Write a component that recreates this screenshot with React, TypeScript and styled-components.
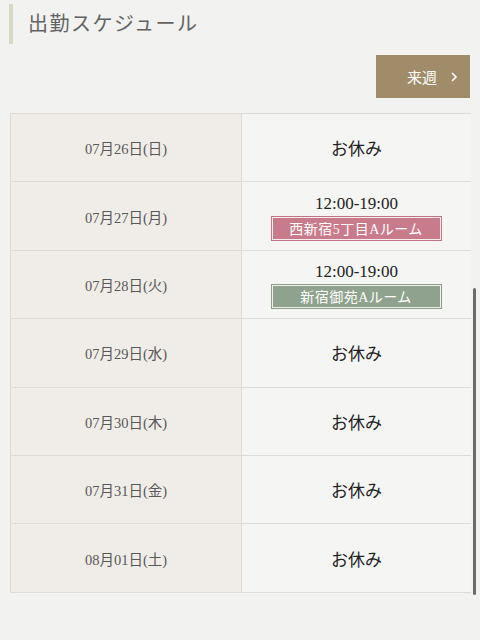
import styled, { createGlobalStyle } from "styled-components";

const GlobalStyle = createGlobalStyle`
  html, body {
    margin: 0;
    padding: 0;
    background: #f2f2f1;
  }
  * {
    box-sizing: border-box;
  }
`;

type Shift = { time: string; room: string; tone: "pink" | "green" };
type Day = { date: string; shift?: Shift };

const days: Day[] = [
  { date: "07月26日(日)" },
  { date: "07月27日(月)", shift: { time: "12:00-19:00", room: "西新宿5丁目Aルーム", tone: "pink" } },
  { date: "07月28日(火)", shift: { time: "12:00-19:00", room: "新宿御苑Aルーム", tone: "green" } },
  { date: "07月29日(水)" },
  { date: "07月30日(木)" },
  { date: "07月31日(金)" },
  { date: "08月01日(土)" },
];

export default function App() {
  return (
    <Page>
      <GlobalStyle />
      <Heading>
        <HeadingBar />
        <HeadingText>出勤スケジュール</HeadingText>
      </Heading>
      <Actions>
        <NextButton>
          <span>来週</span>
          <Chevron viewBox="0 0 8 12">
            <path d="M2 2 L6 6 L2 10" fill="none" stroke="#fff" strokeWidth="1.6" />
          </Chevron>
        </NextButton>
      </Actions>
      <Table>
        {days.map((d) => (
          <Row key={d.date}>
            <DateCell>{d.date}</DateCell>
            <InfoCell>
              {d.shift ? (
                <>
                  <Time>{d.shift.time}</Time>
                  <Room $tone={d.shift.tone}>{d.shift.room}</Room>
                </>
              ) : (
                <Off>お休み</Off>
              )}
            </InfoCell>
          </Row>
        ))}
      </Table>
      <ScrollThumb />
    </Page>
  );
}

const serif = `"Liberation Serif", "Noto Sans CJK JP", serif`;

const Page = styled("div")`
  position: relative;
  width: 480px;
  height: 640px;
  overflow: hidden;
  padding: 3px 9px 0 10px;
  font-family: ${serif};
`;

const Heading = styled("div")`
  display: flex;
  align-items: center;
  height: 41px;
`;

const HeadingBar = styled("div")`
  width: 4px;
  height: 40px;
  margin-left: -1px;
  background: #d9d8c6;
`;

const HeadingText = styled("h1")`
  margin: 0 0 2px 15px;
  font-size: 20px;
  font-weight: normal;
  letter-spacing: 1.5px;
  color: #626262;
  font-family: ${serif};
`;

const Actions = styled("div")`
  display: flex;
  justify-content: flex-end;
  margin-top: 11px;
  padding-right: 1px;
`;

const NextButton = styled("button")`
  display: flex;
  align-items: center;
  justify-content: flex-end;
  gap: 13px;
  width: 94px;
  height: 43px;
  padding: 0 12px 0 0;
  border: none;
  background: #a08c69;
  color: #fff;
  font-family: ${serif};
  font-size: 15px;
  cursor: pointer;
`;

const Chevron = styled("svg")`
  width: 8px;
  height: 12px;
`;

const Table = styled("div")`
  margin-top: 15px;
  width: 461px;
  border-top: 1px solid #dedbd6;
  border-left: 1px solid #dedbd6;
`;

const Row = styled("div")`
  display: grid;
  grid-template-columns: 231px 1fr;
  height: 68.4px;
  border-bottom: 1px solid #dedbd6;
`;

const DateCell = styled("div")`
  display: flex;
  align-items: center;
  justify-content: center;
  background: #f0ede8;
  border-right: 1px solid #dedbd6;
  color: #585858;
  font-size: 14.5px;
`;

const InfoCell = styled("div")`
  display: flex;
  flex-direction: column;
  align-items: center;
  justify-content: center;
  background: #f5f5f4;
  padding-bottom: 2px;
`;

const Off = styled("span")`
  font-size: 17px;
  color: #222;
  margin-top: 2px;
`;

const Time = styled("span")`
  font-size: 17px;
  color: #222;
  line-height: 20px;
  margin-top: 4px;
`;

const Room = styled("span")<{ $tone: "pink" | "green" }>`
  display: flex;
  align-items: center;
  justify-content: center;
  width: 171px;
  height: 25px;
  margin-top: 2px;
  margin-left: -1px;
  border: 1px solid ${(p) => (p.$tone === "pink" ? "#c27386" : "#8c9e88")};
  box-shadow: inset 0 0 0 1px #f4eeee;
  background: ${(p) => (p.$tone === "pink" ? "#c87b8b" : "#8fa28d")};
  color: #fff;
  font-size: 14px;
  letter-spacing: 0.5px;
`;

const ScrollThumb = styled("div")`
  position: absolute;
  top: 288px;
  left: 473px;
  width: 3px;
  height: 307px;
  border-radius: 2px;
  background: #6b6b6b;
`;
